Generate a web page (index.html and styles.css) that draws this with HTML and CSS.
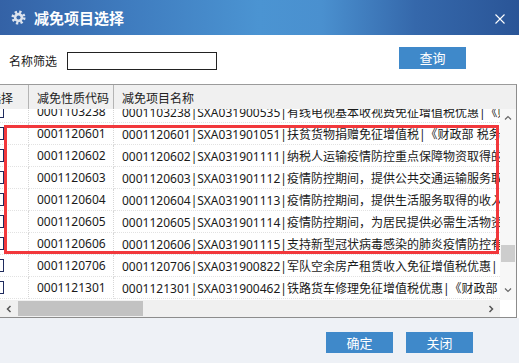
FILE: index.html
```html
<!DOCTYPE html>
<html lang="zh-CN">
<head>
    <meta charset="UTF-8">
    <title>减免项目选择</title>
    <link rel="stylesheet" href="styles.css">
</head>
<body>
    <div class="dialog">
        <div class="titlebar">
            <svg class="gear" viewBox="0 0 16 16" width="15" height="15">
                <circle cx="8" cy="8" r="5" fill="#dde4ee"/>
                <circle cx="8" cy="8" r="6" fill="none" stroke="#dde4ee" stroke-width="3" stroke-dasharray="2.36 2.36"/>
                <circle cx="8" cy="8" r="2.2" fill="#3a69ab"/>
            </svg>
            <span class="title">减免项目选择</span>
            <svg class="close" viewBox="0 0 10 10" width="10" height="10">
                <path d="M0.5 0.5 L9.5 9.5 M9.5 0.5 L0.5 9.5" stroke="#fff" stroke-width="1.1"/>
            </svg>
        </div>

        <div class="filter">
            <label class="filter-label">名称筛选</label>
            <input class="name-input" type="text">
            <button class="btn query-btn">查询</button>
        </div>

        <div class="grid">
            <div class="grid-head">
                <div class="cell c1"><span>选择</span></div>
                <div class="cell c2">减免性质代码</div>
                <div class="cell c3">减免项目名称</div>
            </div>
            <div class="grid-main">
                <div class="grid-view">
                    <div class="viewport">
                        <div class="rows" id="rows"></div>
                    </div>
                    <div class="hscroll">
                        <svg class="arrow" viewBox="0 0 8 8" width="8" height="8"><path d="M5.5 1 L2.5 4 L5.5 7" fill="none" stroke="#555" stroke-width="1.5"/></svg>
                        <div class="hthumb"></div>
                        <div class="spacer"></div>
                        <svg class="arrow" viewBox="0 0 8 8" width="8" height="8"><path d="M2.5 1 L5.5 4 L2.5 7" fill="none" stroke="#555" stroke-width="1.5"/></svg>
                    </div>
                </div>
                <div class="vscroll">
                    <svg class="arrow up" viewBox="0 0 8 8" width="8" height="8"><path d="M1 5.5 L4 2.5 L7 5.5" fill="none" stroke="#666" stroke-width="1.2"/></svg>
                    <div class="vtrack"><div class="vthumb"></div></div>
                    <svg class="arrow down" viewBox="0 0 8 8" width="8" height="8"><path d="M1 2.5 L4 5.5 L7 2.5" fill="none" stroke="#666" stroke-width="1.2"/></svg>
                    <div class="corner"></div>
                </div>
            </div>
            <div class="mark"></div>
        </div>

        <div class="footer">
            <button class="btn">确定</button>
            <button class="btn">关闭</button>
        </div>
    </div>

    <script>
        const items = [
            ['0001103238', 'SXA031900535', '有线电视基本收视费免征增值税优惠|《财政部 税务总局关于延续实施有线电视收视费政策的公告》'],
            ['0001120601', 'SXA031901051', '扶贫货物捐赠免征增值税|《财政部 税务总局 国务院扶贫办公告》'],
            ['0001120602', 'SXA031901111', '纳税人运输疫情防控重点保障物资取得的收入免征增值税'],
            ['0001120603', 'SXA031901112', '疫情防控期间，提供公共交通运输服务取得的收入免征增值税'],
            ['0001120604', 'SXA031901113', '疫情防控期间，提供生活服务取得的收入免征增值税'],
            ['0001120605', 'SXA031901114', '疫情防控期间，为居民提供必需生活物资快递收派服务取得的收入'],
            ['0001120606', 'SXA031901115', '支持新型冠状病毒感染的肺炎疫情防控有关捐赠免征增值税'],
            ['0001120706', 'SXA031900822', '军队空余房产租赁收入免征增值税优惠|《财政部 国家税务总局》'],
            ['0001121301', 'SXA031900462', '铁路货车修理免征增值税优惠|《财政部 国家税务总局》']
        ];

        const rows = document.getElementById('rows');
        items.forEach(item => {
            const row = document.createElement('div');
            row.className = 'row';
            row.innerHTML =
                '<div class="cell c1"><span class="check"></span></div>' +
                '<div class="cell c2">' + item[0] + '</div>' +
                '<div class="cell c3">' + item.join('|') + '</div>';
            rows.appendChild(row);
        });
    </script>
</body>
</html>
```

FILE: styles.css
```css
body {
    margin: 0;
    font-family: "Noto Sans", "Noto Sans CJK SC", sans-serif;
    font-size: 12px;
    color: #1a1a1a;
    background-color: #fff;
}

.dialog {
    width: 519px;
    height: 363px;
    display: flex;
    flex-direction: column;
    overflow: hidden;
}

/* title bar */
.titlebar {
    height: 35px;
    flex-shrink: 0;
    display: flex;
    align-items: center;
    background: linear-gradient(90deg, #3462a6 0%, #3f7cbf 25%, #4b94d2 50%, #4a90cf 62%, #3568ab 80%, #2a5597 100%);
    color: #fff;
}

.gear {
    margin-left: 11px;
    margin-right: 8px;
}

.title {
    font-family: "Noto Sans CJK SC", sans-serif;
    font-size: 15px;
    font-weight: bold;
    line-height: 20px;
}

.close {
    margin-left: auto;
    margin-right: 14px;
    margin-top: 2px;
}

/* filter row */
.filter {
    height: 49px;
    flex-shrink: 0;
    display: flex;
    align-items: flex-start;
    padding-left: 9px;
    box-sizing: border-box;
}

.filter-label {
    margin-top: 17px;
    line-height: 18px;
    font-family: "Noto Sans CJK SC", sans-serif;
}

.name-input {
    margin: 17px 0 0 10px;
    width: 150px;
    height: 18px;
    box-sizing: border-box;
    border: 1px solid #222;
    padding: 0 3px;
    outline: none;
}

.btn {
    width: 67px;
    height: 22px;
    border: none;
    background-color: #3f89ca;
    color: #fff;
    font-family: "Noto Sans CJK SC", sans-serif;
    font-size: 13px;
    line-height: 22px;
    padding: 0;
}

.query-btn {
    margin: 12px 53px 0 auto;
}

/* grid */
.grid {
    position: relative;
    width: 517px;
    height: 234px;
    flex-shrink: 0;
    box-sizing: border-box;
    border-top: 1px solid #9b9b9b;
    border-bottom: 1px solid #8c8c8c;
    border-right: 1px solid #8c8c8c;
    display: flex;
    flex-direction: column;
}

.grid-head {
    height: 24px;
    flex-shrink: 0;
    display: flex;
    background-color: #f0f0f0;
}

.cell {
    box-sizing: border-box;
    display: flex;
    align-items: center;
    white-space: nowrap;
    overflow: hidden;
    flex-shrink: 0;
}

.c1 {
    width: 29px;
    justify-content: flex-end;
    padding-right: 15px;
}

.c1 span {
    flex-shrink: 0;
}

.c2 {
    width: 85px;
    padding-left: 8px;
}

.c3 {
    width: 560px;
    padding-left: 8px;
}

.grid-head .cell {
    border-right: 1px solid #b4b4b4;
    font-family: "Noto Sans CJK SC", sans-serif;
    color: #222;
}

.grid-main {
    flex: 1;
    display: flex;
    min-height: 0;
}

.grid-view {
    width: 500px;
    display: flex;
    flex-direction: column;
}

.viewport {
    height: 191px;
    overflow: hidden;
}

.rows {
    margin-top: -8px;
}

.row {
    display: flex;
    height: 22px;
}

.row .cell {
    border-right: 1px dotted #d6d6d6;
    border-bottom: 1px dotted #e2e2e2;
}

.row .c1 {
    padding-right: 24px;
}

.check {
    width: 13px;
    height: 13px;
    box-sizing: border-box;
    border: 1px solid #1f2b5e;
    background-color: #fff;
}

/* scrollbars */
.hscroll {
    height: 17px;
    display: flex;
    align-items: center;
    background-color: #f0f0f0;
}

.hscroll .arrow {
    margin: 0 5px;
    flex-shrink: 0;
}

.hthumb {
    width: 125px;
    height: 15px;
    margin-left: 0;
    background-color: #c2c2c2;
}

.spacer {
    flex: 1;
}

.vscroll {
    width: 16px;
    display: flex;
    flex-direction: column;
    align-items: center;
    background-color: #f7f7f7;
}

.vscroll .up {
    margin-top: 5px;
}

.vtrack {
    flex: 1;
    width: 100%;
    display: flex;
    flex-direction: column;
    justify-content: flex-end;
    padding-bottom: 24px;
}

.vthumb {
    height: 17px;
    margin: 0 1px;
    background-color: #cdcdcd;
}

.vscroll .down {
    margin-bottom: 6px;
}

.corner {
    width: 100%;
    height: 17px;
    background-color: #fff;
}

/* highlight annotation */
.mark {
    position: absolute;
    left: 4px;
    top: 40px;
    width: 495px;
    height: 129px;
    box-sizing: border-box;
    border: 3px solid #f2383c;
}

/* footer */
.footer {
    flex: 1;
    display: flex;
    justify-content: flex-end;
    align-items: flex-start;
    gap: 13px;
    padding: 14px 46px 0 0;
    background-color: #eef1f6;
}

.footer .btn {
    height: 21px;
    line-height: 21px;
}
```
